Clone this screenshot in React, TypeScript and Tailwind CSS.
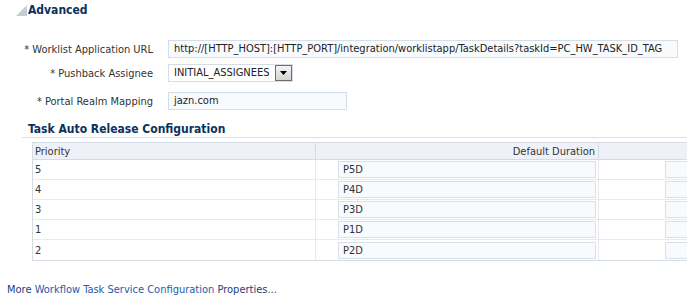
import React from "react";

const rows = [
  { priority: "5", duration: "P5D" },
  { priority: "4", duration: "P4D" },
  { priority: "3", duration: "P3D" },
  { priority: "1", duration: "P1D" },
  { priority: "2", duration: "P2D" },
];

function Field({ label, children }: { label: string; children: React.ReactNode }) {
  return (
    <div className="flex h-[18px] items-center">
      <div className="w-[153px] shrink-0 text-right text-[11px] leading-none text-[#333]">
        <span className="mr-[3px]">*</span>
        {label}
      </div>
      <div className="ml-[15px]">{children}</div>
    </div>
  );
}

export default function App() {
  return (
    <div
      className="h-[299px] w-[687px] overflow-hidden bg-white text-[#333]"
      style={{ fontFamily: "Tahoma, 'DejaVu Sans Condensed', 'Liberation Sans', sans-serif" }}
    >
      <div className="flex h-[14px] items-center pl-[16px] mt-[3px]">
        <svg width="11" height="11" viewBox="0 0 11 11">
          <polygon points="11,0 11,11 0,11" fill="#c4ccd6" />
        </svg>
        <span className="ml-[1px] text-[12px] font-bold leading-none text-[#0b3160]">Advanced</span>
      </div>

      <div className="mt-[23px] flex flex-col">
        <Field label="Worklist Application URL">
          <div className="flex h-[18px] w-[510px] items-center whitespace-nowrap border border-[#d5dde6] bg-[#f8fbfe] pl-[5px] text-[11px] text-[#222]">
            http://[HTTP_HOST]:[HTTP_PORT]/integration/worklistapp/TaskDetails?taskId=PC_HW_TASK_ID_TAG
          </div>
        </Field>
        <div className="mt-[6px]">
          <Field label="Pushback Assignee">
            <div className="flex h-[18px] w-[125px] items-center border border-[#d5dde6] bg-white text-[11px] text-[#222]">
              <span className="flex-1 whitespace-nowrap pl-[5px]">INITIAL_ASSIGNEES</span>
              <div className="flex h-[16px] w-[17px] items-center justify-center border border-[#6f6f6f] bg-gradient-to-b from-[#f4f4f4] to-[#d4d4d4]">
                <svg width="7" height="4" viewBox="0 0 7 4">
                  <polygon points="0,0 7,0 3.5,4" fill="#000" />
                </svg>
              </div>
            </div>
          </Field>
        </div>
        <div className="mt-[10px]">
          <Field label="Portal Realm Mapping">
            <div className="flex h-[18px] w-[179px] items-center border border-[#d5dde6] bg-[#f8fbfe] pl-[5px] text-[11px] text-[#222]">
              jazn.com
            </div>
          </Field>
        </div>
      </div>

      <div className="ml-[22px] mt-[10px] flex h-[18px] items-center border-b border-[#d9e0e8] pl-[6px] text-[12px] font-bold leading-none text-[#0b3160]">
        Task Auto Release Configuration
      </div>

      <div className="ml-[32px] mt-[4px] w-[700px] border border-[#d3dbe4] text-[11px] leading-none">
        <div className="flex h-[17px] border-b border-[#d3dbe4] bg-[#eef2f8]">
          <div className="flex w-[283px] items-center border-r border-[#d3dbe4] pl-[2px]">Priority</div>
          <div className="flex w-[283px] items-center justify-end border-r border-[#d3dbe4] pr-[3px]">
            Default Duration
          </div>
          <div className="flex-1" />
        </div>
        {rows.map((r) => (
          <div key={r.priority} className="flex h-[20px] border-b border-[#e6eaef] last:border-b-0">
            <div className="flex w-[283px] items-center border-r border-[#e6eaef] pl-[2px]">{r.priority}</div>
            <div className="flex w-[283px] items-center justify-end border-r border-[#e6eaef] pr-[2px]">
              <div className="flex h-[17px] w-[258px] items-center border border-[#d9e0e8] bg-[#f8fbfe] pl-[4px]">
                {r.duration}
              </div>
            </div>
            <div className="flex flex-1 items-center pl-[66px]">
              <div className="h-[17px] w-[60px] border border-[#d9e0e8] bg-[#f8fbfe]" />
            </div>
          </div>
        ))}
      </div>

      <div className="mt-[23px] pl-[7px] text-[11px] leading-none text-[#23407a]">
        More <span className="text-[#1c5cab]">Workflow Task Service Configuration</span> Properties...
      </div>
    </div>
  );
}
